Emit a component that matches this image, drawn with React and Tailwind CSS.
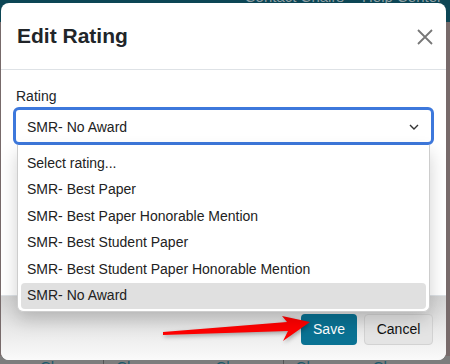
import React from 'react';

const options = [
  'Select rating...',
  'SMR- Best Paper',
  'SMR- Best Paper Honorable Mention',
  'SMR- Best Student Paper',
  'SMR- Best Student Paper Honorable Mention',
  'SMR- No Award',
];

export default function App() {
  return (
    <div className="relative w-[450px] h-[364px] overflow-hidden bg-[#776a6a] font-['Liberation_Sans',Arial,sans-serif] flex flex-col">
      {/* page behind the modal */}
      <div className="h-[22px] bg-[#0c4655] flex justify-end gap-[18px] pr-[8px] text-[15px] text-[#8e9ea3] leading-[14px]">
        <span className="-mt-[10px]">Contact Chairs</span>
        <span className="-mt-[10px]">Help Center</span>
      </div>
      <div className="flex-1" />
      <div className="h-[8px] bg-[#7d7d7d] flex text-[15px] leading-[14px] text-[#1b5a6c]">
        <span className="ml-[40px] mt-[4px]">Ch</span>
        <span className="ml-[44px] mt-[4px] border-l border-[#555] pl-[12px]">Ch</span>
        <span className="ml-[80px] mt-[4px]">Ch</span>
        <span className="ml-[48px] mt-[4px] border-l border-[#555] pl-[12px]">Ch</span>
        <span className="ml-[58px] mt-[4px]">Ch</span>
        <span className="ml-[60px] mt-[4px]">Ch</span>
      </div>

      {/* modal */}
      <div className="absolute left-[1px] top-[3px] w-[445px] h-[357px] bg-white rounded-[8px] flex flex-col">
        <div className="h-[67px] flex items-center justify-between pl-[16px] pr-[13px] border-b border-[#dee2e6]">
          <h2 className="text-[21px] font-bold text-[#212529]">Edit Rating</h2>
          <svg width="16" height="16" viewBox="0 0 16 16" className="mt-[2px]">
            <path d="M1 1L15 15M15 1L1 15" stroke="#777" strokeWidth="1.8" />
          </svg>
        </div>

        <div className="h-[225px] px-[12px] pt-[16px]">
          <div className="text-[14px] leading-[20px] text-[#212529] pl-[3px] mb-[1px]">Rating</div>
          <div className="relative">
            <div className="h-[38px] border-[3px] border-[#3d78dc] rounded-[6px] flex items-center justify-between pl-[11px] pr-[12px] pt-[2px] text-[14px] text-[#222]">
              <span>SMR- No Award</span>
              <svg width="10" height="6" viewBox="0 0 10 6">
                <path d="M1 1L5 5L9 1" fill="none" stroke="#333" strokeWidth="1.4" />
              </svg>
            </div>
            <div className="absolute top-full left-[4px] right-[4px] z-10 bg-white border border-t-0 border-[#cdcdcd] rounded-b-[6px] px-[3px] pt-[5px] pb-[2px] shadow-[0_8px_18px_rgba(0,0,0,0.18)]">
              {options.map((opt, i) => (
                <div
                  key={i}
                  className={`h-[26.5px] flex items-center pl-[6px] text-[14px] text-[#222] rounded-[4px] ${
                    i === options.length - 1 ? 'bg-[#e0e0e0]' : ''
                  }`}
                >
                  {opt}
                </div>
              ))}
            </div>
          </div>
        </div>

        <div className="flex-1 border-t border-[#dee2e6] rounded-b-[8px] bg-gradient-to-b from-[#d3d3d3] via-[#e8e8e8] to-[#fafafa] flex items-center justify-end gap-[7px] pr-[13px] pt-[2px]">
          <button className="h-[31px] w-[56px] rounded-[4px] bg-[#0a7293] text-white text-[14px]">Save</button>
          <button className="h-[31px] w-[69px] rounded-[4px] bg-[#e4e4e4] border border-[#d2d2d2] text-[#111] text-[14px]">Cancel</button>
        </div>
      </div>

      {/* red annotation arrow */}
      <svg className="absolute left-0 top-0 pointer-events-none" width="450" height="364" viewBox="0 0 450 364">
        <polygon
          points="163,332 287,322 282,316 310,322 283,341 288,331 163,335"
          fill="#ff0000"
          style={{ filter: 'drop-shadow(1px 2px 2px rgba(0,0,0,0.3))' }}
        />
      </svg>
    </div>
  );
}
